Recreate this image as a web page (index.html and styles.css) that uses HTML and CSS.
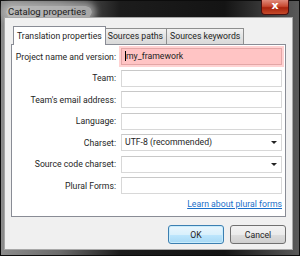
FILE: index.html
```html
<!DOCTYPE html>
<html lang="en">
<head>
    <meta charset="UTF-8">
    <title>Catalog properties</title>
    <link rel="stylesheet" href="styles.css">
</head>
<body>
    <div class="window">
        <div class="titlebar">
            <span class="title">Catalog properties</span>
            <span class="close">x</span>
        </div>
        <div class="client">
            <div class="tabs">
                <div class="tab active">Translation properties</div>
                <div class="tab">Sources paths</div>
                <div class="tab">Sources keywords</div>
            </div>
            <div class="panel">
                <div class="form">
                    <label>Project name and version:</label>
                    <div class="field invalid"><span class="caret"></span>my_framework</div>
                    <label>Team:</label>
                    <div class="field"></div>
                    <label>Team's email address:</label>
                    <div class="field"></div>
                    <label>Language:</label>
                    <div class="field"></div>
                    <label>Charset:</label>
                    <div class="field select">UTF-8 (recommended)<span class="arrow"></span></div>
                    <label>Source code charset:</label>
                    <div class="field select"><span class="arrow"></span></div>
                    <label>Plural Forms:</label>
                    <div class="field"></div>
                </div>
                <a href="#" class="learn">Learn about plural forms</a>
            </div>
            <div class="buttons">
                <button class="btn default">OK</button>
                <button class="btn">Cancel</button>
            </div>
        </div>
    </div>
</body>
</html>
```

FILE: styles.css
```css
body {
    margin: 0;
    background-color: #1a1a1a;
    font-family: Roboto, 'Noto Sans', sans-serif;
    font-size: 8.7px;
    color: #1e1e1e;
}
.window {
    width: 300px;
    height: 256px;
    box-sizing: border-box;
    display: flex;
    flex-direction: column;
    padding: 0 6px 5px 3px;
    border: 1px solid #0c0c0c;
    background: linear-gradient(to right, #8c8c8c 0, #6a6a6a 20%, #1c1c1c 40%, #141414 75%, #5a5a5a 100%);
}
.titlebar {
    height: 16px;
    display: flex;
    justify-content: space-between;
    align-items: flex-start;
}
.title {
    margin: 5px 0 0 2px;
    padding: 0 6px 0 2px;
    font-size: 9.5px;
    line-height: 12px;
    color: #222;
    background: rgba(200, 200, 200, 0.75);
    border-radius: 6px;
    box-shadow: 0 0 6px 4px rgba(200, 200, 200, 0.6);
}
.close {
    width: 28px;
    height: 15px;
    margin: -1px 4px 0 0;
    border: 1px solid #4a1010;
    border-top: none;
    border-radius: 0 0 4px 4px;
    box-sizing: border-box;
    background: linear-gradient(#e08a7a, #c84a32 45%, #a8240e 55%, #c64a2a);
    color: #fff;
    font-family: 'DejaVu Sans', sans-serif;
    font-weight: bold;
    font-size: 11px;
    line-height: 12px;
    text-align: center;
}
.client {
    flex: 1;
    display: flex;
    flex-direction: column;
    background-color: #f0f0f0;
    border: 1px solid #a8a8a8;
    padding: 8px 6px 5px 6px;
}
.tabs {
    display: flex;
    align-items: flex-end;
    padding-left: 2px;
    height: 18px;
}
.tab {
    height: 16px;
    line-height: 15px;
    padding: 0 3px;
    margin-left: -1px;
    border: 1px solid #8e8f8f;
    border-bottom: none;
    background: linear-gradient(#f2f2f2, #e3e3e3 50%, #d9d9d9);
    white-space: nowrap;
    box-sizing: border-box;
}
.tab.active {
    height: 19px;
    line-height: 19px;
    margin: 0 -1px -1px 0;
    padding: 0 3px;
    background: #fff;
    border-color: #898c95;
    position: relative;
    z-index: 1;
}
.panel {
    flex: 1;
    background: #fff;
    border: 1px solid #898c95;
    padding: 3px 3px 0 0;
    display: flex;
    flex-direction: column;
}
.form {
    display: grid;
    grid-template-columns: 104px 1fr;
    column-gap: 5px;
    row-gap: 4.5px;
    grid-auto-rows: 17px;
    align-items: center;
}
.form label {
    text-align: right;
    white-space: nowrap;
}
.field {
    height: 17px;
    box-sizing: border-box;
    border: 1px solid #d8d8d8;
    border-top-color: #c8c8c8;
    background: #fff;
    padding-left: 3px;
    line-height: 15px;
    position: relative;
}
.field.invalid {
    background: #ffc4c4;
    border-color: #e3a6a6;
    box-shadow: 0 0 0 2px #ffd2d2;
}
.caret {
    display: inline-block;
    width: 1px;
    height: 10px;
    background: #000;
    vertical-align: -2px;
}
.arrow {
    position: absolute;
    right: 4px;
    top: 6px;
    border-left: 3px solid transparent;
    border-right: 3px solid transparent;
    border-top: 3px solid #222;
}
.learn {
    align-self: flex-end;
    margin-top: 5px;
    color: #1a6fc9;
    text-decoration: underline;
}
.buttons {
    display: flex;
    justify-content: flex-end;
    gap: 6px;
    margin-top: 8px;
}
.btn {
    width: 56px;
    height: 19px;
    font-family: inherit;
    font-size: 8.7px;
    color: #1e1e1e;
    border: 1px solid #707070;
    border-radius: 3px;
    background: linear-gradient(#f2f2f2, #ebebeb 50%, #dddddd 51%, #cfcfcf);
    padding: 0;
}
.btn.default {
    border-color: #3c7fb1;
    background: linear-gradient(#eaf6fd, #d9f0fc 50%, #bee6fd 51%, #a7d9f5);
    box-shadow: inset 0 0 0 1px #c8ecfc;
}
```
